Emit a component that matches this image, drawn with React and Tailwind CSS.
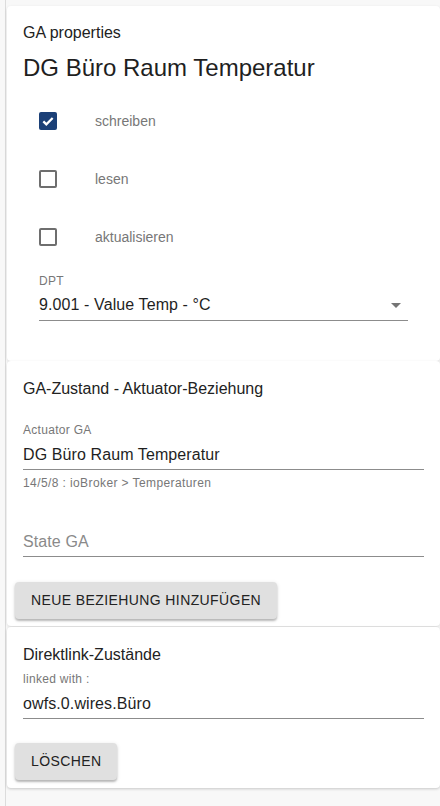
import React from "react";

const rows = [
  { label: "schreiben", checked: true },
  { label: "lesen", checked: false },
  { label: "aktualisieren", checked: false },
];

const Check = ({ checked }) =>
  checked ? (
    <span className="flex h-[18px] w-[18px] items-center justify-center rounded-[2px] bg-[#1b4077]">
      <svg viewBox="0 0 24 24" className="h-[16px] w-[16px]" fill="none" stroke="white" strokeWidth="3.4">
        <path d="M5 12.5l4.5 4.5L19 7.5" />
      </svg>
    </span>
  ) : (
    <span className="h-[18px] w-[18px] rounded-[2px] border-2 border-[#6e6e6e]" />
  );

const Button = ({ children }) => (
  <button className="h-[37px] -ml-[8px] rounded-[4px] bg-[#e0e0e0] px-[16px] text-[14px] uppercase tracking-[0.4px] text-[#222] shadow-[0_2px_2px_rgba(0,0,0,0.22),0_1px_4px_rgba(0,0,0,0.12)]">
    {children}
  </button>
);

const Field = ({ label, value, helper, placeholder }) => (
  <div>
    {label && <div className="text-[12px] leading-[14px] tracking-[0.3px] text-[#777]">{label}</div>}
    <div
      className={
        "border-b border-[#8c8c8c] pb-[4px] text-[16px] leading-[20px] tracking-[0.1px] " +
        (label ? "mt-[8px] " : "") +
        (placeholder ? "text-[#8a8a8a]" : "text-[#1f1f1f]")
      }
    >
      {value || placeholder}
    </div>
    {helper && <div className="mt-[6px] text-[12px] leading-[14px] tracking-[0.4px] text-[#777]">{helper}</div>}
  </div>
);

const App = () => {
  return (
    <div className="min-h-[806px] bg-[#f8f8f8] font-['Liberation_Sans',Arial,sans-serif]">
      <div className="ml-[5px] min-h-[806px] border-l border-[#dcdcdc] pl-[1px] pt-[6px]">
        {/* GA properties */}
        <section className="rounded-[4px] bg-white px-[16px] pb-[40px] pt-[17px] shadow-[0_1px_3px_rgba(0,0,0,0.12)]">
          <h3 className="text-[16px] leading-[20px] text-[#222]">GA properties</h3>
          <h2 className="mt-[11px] text-[24px] leading-[28px] text-[#1f1f1f]">DG Büro Raum Temperatur</h2>
          <div className="mt-[10px]">
            {rows.map((r) => (
              <div key={r.label} className="flex h-[58px] items-center pl-[16px]">
                <Check checked={r.checked} />
                <span className="ml-[38px] text-[14px] text-[#777]">{r.label}</span>
              </div>
            ))}
          </div>
          <div className="mt-[8px] pl-[16px] pr-[16px]">
            <div className="text-[12px] leading-[14px] tracking-[0.3px] text-[#777]">DPT</div>
            <div className="mt-[7px] flex items-center justify-between border-b border-[#8c8c8c] pb-[5px]">
              <span className="text-[16px] leading-[20px] tracking-[0.1px] text-[#1f1f1f]">9.001 - Value Temp - °C</span>
              <svg viewBox="0 0 10 5" className="mr-[7px] h-[5px] w-[10px]">
                <path d="M0 0h10L5 5z" fill="#757575" />
              </svg>
            </div>
          </div>
        </section>

        {/* GA-Zustand */}
        <section className="rounded-[4px] bg-white px-[16px] pb-[7px] pt-[18px] shadow-[0_1px_3px_rgba(0,0,0,0.12)]">
          <h3 className="text-[16px] leading-[20px] text-[#222]">GA-Zustand - Aktuator-Beziehung</h3>
          <div className="mt-[24px]">
            <Field label="Actuator GA" value="DG Büro Raum Temperatur" helper="14/5/8 : ioBroker > Temperaturen" />
          </div>
          <div className="mt-[42px]">
            <Field placeholder="State GA" />
          </div>
          <div className="mt-[25px]">
            <Button>Neue Beziehung hinzufügen</Button>
          </div>
        </section>

        {/* Direktlink */}
        <section className="mt-[1px] rounded-[4px] bg-white px-[16px] pb-[8px] pt-[18px] shadow-[0_1px_3px_rgba(0,0,0,0.2)]">
          <h3 className="text-[16px] leading-[20px] text-[#222]">Direktlink-Zustände</h3>
          <div className="mt-[7px]">
            <Field label="linked with :" value="owfs.0.wires.Büro" />
          </div>
          <div className="mt-[24px]">
            <Button>Löschen</Button>
          </div>
        </section>
      </div>
    </div>
  );
};

export default App;
